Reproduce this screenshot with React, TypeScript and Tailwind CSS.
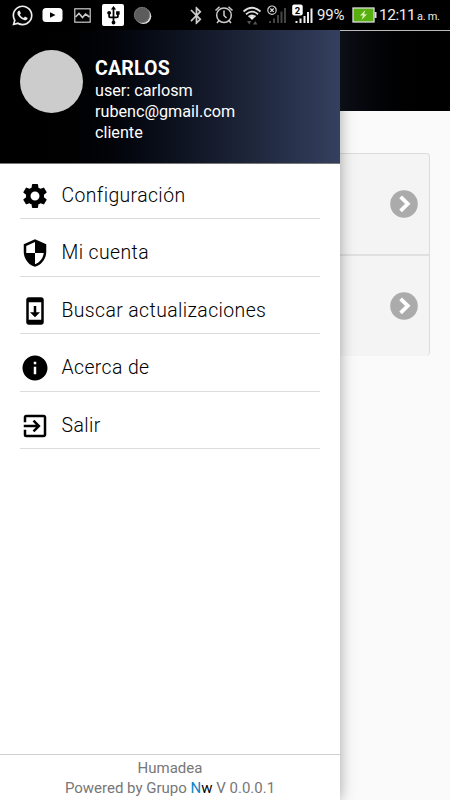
import type { IconType } from "react-icons";
import { FaWhatsapp } from "react-icons/fa";
import {
  MdBluetooth,
  MdExitToApp,
  MdInfo,
  MdSecurity,
  MdSettings,
  MdSystemUpdate,
  MdUsb,
} from "react-icons/md";

type MenuItem = { label: string; icon: IconType };

const MENU: MenuItem[] = [
  { label: "Configuración", icon: MdSettings },
  { label: "Mi cuenta", icon: MdSecurity },
  { label: "Buscar actualizaciones", icon: MdSystemUpdate },
  { label: "Acerca de", icon: MdInfo },
  { label: "Salir", icon: MdExitToApp },
];

function StatusBar() {
  return (
    <div className="h-[30px] bg-black text-[#eee] flex items-center justify-between pl-[11px] pr-[12px]">
      <div className="flex items-center">
        <FaWhatsapp size={23} aria-hidden />
        <svg className="ml-[8px]" width="21" height="16" viewBox="0 0 21 16" aria-hidden>
          <rect x="0.5" y="1" width="20" height="14" rx="3.5" fill="#fff" />
          <path d="M8 5.2l5.5 2.8L8 10.8z" fill="#000" />
        </svg>
        <svg
          className="ml-[11px]"
          width="17"
          height="15"
          viewBox="0 0 17 15"
          fill="none"
          stroke="#ccc"
          strokeWidth="1.2"
          aria-hidden
        >
          <rect x="0.8" y="0.8" width="15.4" height="13.4" />
          <path d="M1.5 9l3.5-3.5 3.5 4 3-3.5 4 3" strokeWidth="1.6" />
        </svg>
        <div className="ml-[11px] size-[22px] rounded-[2px] bg-white text-black flex items-center justify-center">
          <MdUsb size={21} aria-hidden />
        </div>
        <svg className="ml-[9px]" width="19" height="19" viewBox="0 0 19 19" aria-hidden>
          <circle cx="10.5" cy="10.3" r="7.8" fill="#ddd" />
          <circle cx="9" cy="9" r="8" fill="#5c5c5c" />
          <circle cx="9" cy="9" r="7.6" fill="none" stroke="#999" strokeDasharray="1 1.2" />
        </svg>
      </div>

      <div className="flex items-center">
        <MdBluetooth size={21} className="text-[#ccc]" aria-hidden />
        <svg
          className="ml-[7px]"
          width="20"
          height="20"
          viewBox="0 0 20 20"
          fill="none"
          stroke="#ccc"
          strokeWidth="1.5"
          aria-hidden
        >
          <circle cx="10" cy="10.2" r="7.3" />
          <path d="M10 5.5v5l2.5 2.5M1.5 5.5l4-3.8M18.5 5.5l-4-3.8M5 15.5l-2 2.5M15 15.5l2 2.5" />
        </svg>
        <svg className="ml-[8px]" width="20" height="20" viewBox="0 0 20 20" fill="none" aria-hidden>
          <path
            d="M1.5 6.5Q10 -1 18.5 6.5M4 9.2Q10 4 16 9.2M6.5 11.8Q10 9 13.5 11.8"
            stroke="#ddd"
            strokeWidth="1.8"
          />
          <path d="M10 15l-2.8-3.1q2.8-1.8 5.6 0z" fill="#eee" />
          <path d="M5 16h4.4L7.2 19.5zM11 19.5h4.4L13.2 16z" fill="#555" />
        </svg>
        <svg className="ml-[5px]" width="20" height="20" viewBox="0 0 20 20" aria-hidden>
          <path
            d="M2 16h2v2H2zM6 13.5h2V18H6zM10 10h2v8h-2zM13.5 6.5h2V18h-2zM17 3h2v15h-2z"
            fill="#444"
          />
          <circle cx="5" cy="5.2" r="4.2" fill="#000" stroke="#ccc" strokeWidth="1.2" />
          <path d="M3.3 3.5l3.4 3.4M6.7 3.5L3.3 6.9" stroke="#ddd" strokeWidth="1.2" />
        </svg>
        <svg className="ml-[5px]" width="22" height="22" viewBox="0 0 22 22" aria-hidden>
          <path
            d="M3.5 17h2v2h-2zM7.5 14.5h2V19h-2zM11.5 12h2v7h-2zM15 8h2v11h-2zM18.5 4.5h2V19h-2z"
            fill="#eee"
          />
          <rect x="0.2" y="0.5" width="10.5" height="11" rx="2" fill="#fff" />
          <text x="2.8" y="9.5" fontSize="9.5" fontWeight="700" fontFamily="Roboto, sans-serif" fill="#000">
            2
          </text>
        </svg>
        <span className="ml-[3px] mt-[1px] w-[28px] text-[15px] tracking-[-0.2px] whitespace-nowrap">99%</span>
        <svg className="ml-[7px]" width="25" height="16" viewBox="0 0 25 16" aria-hidden>
          <rect x="1" y="1" width="21" height="14" fill="#58b010" stroke="#ddd" strokeWidth="1.3" />
          <path d="M22.5 5h2v6h-2z" fill="#ddd" />
          <path d="M13.5 3l-5.5 5.5h3L9.5 13l5.5-5.8h-3z" fill="#d8f0b8" />
        </svg>
        <span className="ml-[2px] mt-[1px] w-[36px] text-[15.5px] tracking-[-0.5px] whitespace-nowrap">
          12:11
        </span>
        <span className="ml-[2px] mt-[4px] w-[21px] text-[11px] tracking-[-0.3px] whitespace-nowrap">a. m.</span>
      </div>
    </div>
  );
}

function ArrowBadge() {
  return (
    <svg width="28" height="28" viewBox="0 0 28 28" aria-hidden>
      <circle cx="14" cy="14" r="13.8" fill="#ababab" />
      <path d="M10.6 6.8l7.2 7-7.2 7" fill="none" stroke="#fff" strokeWidth="3.8" />
    </svg>
  );
}

function Drawer() {
  return (
    <aside className="w-[340px] shrink-0 bg-white flex flex-col shadow-[0_0_14px_rgba(0,0,0,0.35)]">
      <header className="h-[134px] pl-5 pt-5 flex border-b border-[#777] bg-linear-to-r from-black from-5% to-[#34405f]">
        <div className="size-[63px] rounded-full bg-[#cccccc]" />
        <div className="ml-3 pt-[8px] text-white text-[16.2px] leading-[21px]">
          <div className="text-[19.5px] leading-[22px] font-bold tracking-[0.2px]">CARLOS</div>
          <div>user: carlosm</div>
          <div>rubenc@gmail.com</div>
          <div>cliente</div>
        </div>
      </header>

      <nav className="px-5 flex-1">
        {MENU.map(({ label, icon: Icon }) => (
          <div
            key={label}
            className="h-[57.5px] first:h-[55px] pb-[7.5px] flex items-end border-b border-[#dcdcdc] text-black"
          >
            <Icon size={30} className="shrink-0" aria-hidden />
            <span className="ml-[11.5px] text-[19.4px] leading-[30px] tracking-[0.4px] font-light text-black">
              {label}
            </span>
          </div>
        ))}
      </nav>

      <footer className="h-[46px] pt-[4px] border-t border-[#d0d0d0] text-center text-[15px] leading-[19.5px] text-[#777]">
        <div>Humadea</div>
        <div>
          Powered by Grupo <span className="text-[#0b86c8]">N</span>
          <span className="text-black">w</span> V 0.0.0.1
        </div>
      </footer>
    </aside>
  );
}

export default function App() {
  return (
    <div className="w-[450px] h-[800px] overflow-hidden flex flex-col bg-[#fafafa] font-[Roboto,sans-serif]">
      <StatusBar />
      <div className="flex-1 flex overflow-hidden">
        <div className="z-10 flex">
          <Drawer />
        </div>
        <main className="flex-1">
          <div className="relative z-20 h-[81px] border-t border-[#bbb] bg-linear-to-r from-[#0c1017] to-black to-90%" />
          <div className="mt-[42px] mr-5 rounded-r-[4px] border-t border-r border-[#dcdcdc] bg-[#f4f4f4]">
            <div className="h-[102px] pr-[11px] flex items-center justify-end border-b-2 border-[#e0e0e0]">
              <ArrowBadge />
            </div>
            <div className="h-[100px] pr-[11px] flex items-center justify-end">
              <ArrowBadge />
            </div>
          </div>
        </main>
      </div>
    </div>
  );
}
